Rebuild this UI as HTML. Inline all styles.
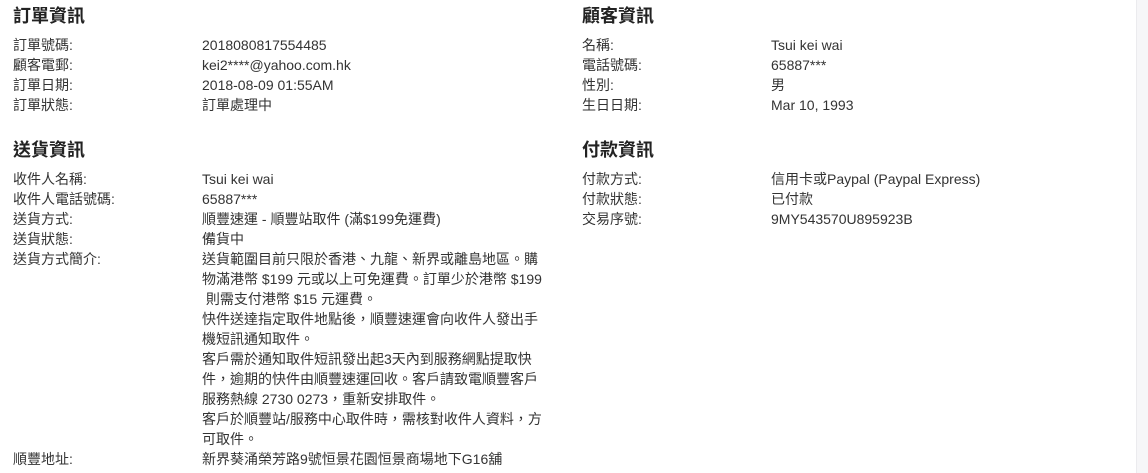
<!DOCTYPE html>
<html><head><meta charset="utf-8"><style>
body{margin:0;width:1148px;height:473px;overflow:hidden;background:#fff;font-family:"Liberation Sans","Noto Sans CJK TC",sans-serif;color:#333;font-size:14px;position:relative}
.strip{position:absolute;left:1136px;top:0;width:12px;height:473px;background:#f6f6f8;border-left:1px solid #ebebee}
.sec{position:absolute;width:550px}
h2{margin:0;font-size:18px;font-weight:bold;color:#222;height:20px;line-height:20px}
.row{display:flex;line-height:20px}
.l{width:189px;flex:none}
.v{width:345px}
</style></head><body>
<div class="strip"></div>
<div class="sec" style="left:13px;top:6px">
<h2>訂單資訊</h2>
<div style="height:9px"></div>
<div class="row"><div class="l">訂單號碼:</div><div class="v">2018080817554485</div></div>
<div class="row"><div class="l">顧客電郵:</div><div class="v">kei2****@yahoo.com.hk</div></div>
<div class="row"><div class="l">訂單日期:</div><div class="v">2018-08-09 01:55AM</div></div>
<div class="row"><div class="l">訂單狀態:</div><div class="v">訂單處理中</div></div>
</div>
<div class="sec" style="left:582px;top:6px">
<h2>顧客資訊</h2>
<div style="height:9px"></div>
<div class="row"><div class="l">名稱:</div><div class="v">Tsui kei wai</div></div>
<div class="row"><div class="l">電話號碼:</div><div class="v">65887***</div></div>
<div class="row"><div class="l">性別:</div><div class="v">男</div></div>
<div class="row"><div class="l">生日日期:</div><div class="v">Mar 10, 1993</div></div>
</div>
<div class="sec" style="left:13px;top:140px">
<h2>送貨資訊</h2>
<div style="height:9px"></div>
<div class="row"><div class="l">收件人名稱:</div><div class="v">Tsui kei wai</div></div>
<div class="row"><div class="l">收件人電話號碼:</div><div class="v">65887***</div></div>
<div class="row"><div class="l">送貨方式:</div><div class="v">順豐速運 - 順豐站取件 (滿$199免運費)</div></div>
<div class="row"><div class="l">送貨狀態:</div><div class="v">備貨中</div></div>
<div class="row"><div class="l">送貨方式簡介:</div><div class="v">送貨範圍目前只限於香港、九龍、新界或離島地區。購<br>物滿港幣 $199 元或以上可免運費。訂單少於港幣 $199<br>&nbsp;則需支付港幣 $15 元運費。<br>快件送達指定取件地點後，順豐速運會向收件人發出手<br>機短訊通知取件。<br>客戶需於通知取件短訊發出起3天內到服務網點提取快<br>件，逾期的快件由順豐速運回收。客戶請致電順豐客戶<br>服務熱線 2730 0273，重新安排取件。<br>客戶於順豐站/服務中心取件時，需核對收件人資料，方<br>可取件。</div></div>
<div class="row"><div class="l">順豐地址:</div><div class="v" style="white-space:nowrap">新界葵涌榮芳路9號恒景花園恒景商場地下G16舖</div></div>
</div>
<div class="sec" style="left:582px;top:140px">
<h2>付款資訊</h2>
<div style="height:9px"></div>
<div class="row"><div class="l">付款方式:</div><div class="v">信用卡或Paypal (Paypal Express)</div></div>
<div class="row"><div class="l">付款狀態:</div><div class="v">已付款</div></div>
<div class="row"><div class="l">交易序號:</div><div class="v">9MY543570U895923B</div></div>
</div>
</body></html>
